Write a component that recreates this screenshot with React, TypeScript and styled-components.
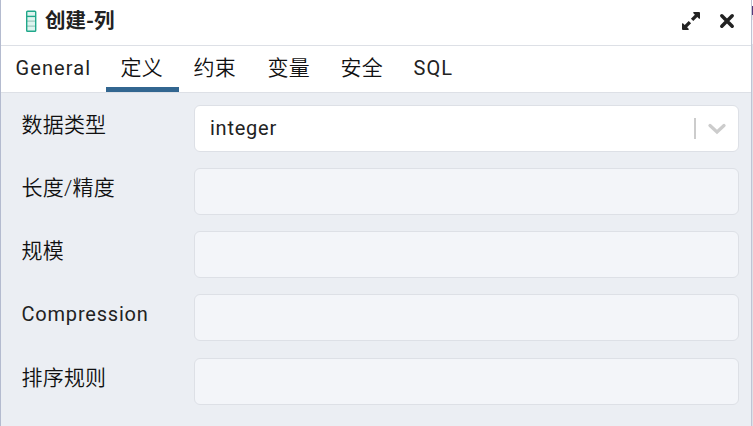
import React from "react";
import styled, { createGlobalStyle } from "styled-components";

const GlobalStyle = createGlobalStyle`
  * { box-sizing: border-box; }
  body { margin: 0; background: #ebeef3; overflow: hidden; }
`;

const Backdrop = styled.div`
  display: flex;
  height: 426px;
  background: linear-gradient(#fff 0 6px, #54397a 6px 15px, #e4e2e8 15px 20px, #f4f4f8 20px 44px, #dde0e6 44px);
`;

const Dialog = styled.section`
  display: flex;
  flex-direction: column;
  width: 752px;
  height: 426px;
  border: solid #b4bbcf;
  border-width: 0 1px;
  border-right-color: #bfc4d4;
  background: #ebeef3;
  color: #222;
  font-family: Roboto, "Noto Sans CJK SC", sans-serif;
  font-size: 20px;
  font-weight: 370;
  letter-spacing: 0.75px;
`;

const Header = styled.header`
  display: flex;
  align-items: center;
  height: 46px;
  padding: 0 16px 4px 24px;
  background: #fff;
  border-bottom: 1px solid #dde0e6;
`;

const Title = styled.h1`
  flex: 1;
  margin: 0 0 0 8px;
  font-size: 20.5px;
  line-height: 30px;
  font-weight: 700;
  letter-spacing: 0;
`;

const Actions = styled.div`
  display: flex;
  align-items: center;
  gap: 18px;
`;

const IconButton = styled.button`
  display: flex;
  padding: 0;
  border: 0;
  background: none;
  color: #222;
`;

const Tabs = styled.nav`
  display: flex;
  height: 47px;
  background: #fff;
  border-bottom: 1px solid #dde0e6;
`;

const Tab = styled.button<{ $active?: boolean; $width: number }>`
  width: ${(p) => p.$width}px;
  height: 46px;
  padding: 3px 0 0 14.5px;
  border: 0;
  border-bottom: 5px solid ${(p) => (p.$active ? "#326690" : "transparent")};
  background: none;
  color: inherit;
  font: inherit;
  line-height: 38px;
  text-align: left;
  white-space: nowrap;
`;

const Text = styled.span<{ $cjk: boolean; $spacing?: number }>`
  color: ${(p) => (p.$cjk ? "#111" : "#222")};
  font-size: ${(p) => (p.$cjk ? 21 : 20)}px;
  font-weight: ${(p) => (p.$cjk ? 350 : 370)};
  letter-spacing: ${(p) => (p.$cjk ? 0.2 : p.$spacing ?? 0.8)}px;
`;

const Form = styled.main`
  display: flex;
  flex-direction: column;
  gap: 16.15px;
  padding: 12px 12px 0 20.5px;
`;

const Row = styled.div`
  display: grid;
  grid-template-columns: 172.5px 1fr;
  height: 47px;
`;

const Label = styled.label`
  line-height: 30px;
  padding-top: 5px;
`;

const Field = styled.div<{ $disabled?: boolean }>`
  display: flex;
  align-items: center;
  height: 47px;
  padding: 0 12px 0 15px;
  border: 1px solid #dde0e6;
  border-radius: 6px;
  background: ${(p) => (p.$disabled ? "#f3f5f9" : "#fff")};
`;

const Value = styled.span`
  flex: 1;
  margin-top: -2px;
`;

const Separator = styled.span`
  width: 2px;
  height: 21px;
  margin-right: 12px;
  background: #ccc;
`;

const ColumnIcon = () => (
  <svg width="12" height="23" viewBox="0 0 12 23">
    <rect x="1.7" y="2.2" width="9" height="20" rx="0.8" fill="#def4ef" />
    <path d="M1.7 12.2h9M1.7 17.2h9" stroke="#9fc9c0" strokeWidth="1.2" />
    <rect x="1.7" y="2.2" width="9" height="20" rx="0.8" fill="none" stroke="#20a88b" strokeWidth="1.4" />
    <path d="M1.7 7.4h9" stroke="#20a88b" strokeWidth="1.4" />
  </svg>
);

const ExpandIcon = () => (
  <svg width="20" height="20" viewBox="0 0 20 20">
    <path
      d="M12.6 1H18q1 0 1 1v5.4q-.4.8-1.2.2l-1.5-1.5-4 4-2.4-2.4 4-4-1.5-1.5q-.5-.8.2-1.2zM7.4 19H2q-1 0-1-1v-5.4q.4-.8 1.2-.2l1.5 1.5 4-4 2.4 2.4-4 4 1.5 1.5q.5.8-.2 1.2z"
      fill="currentColor"
    />
    <path d="M7.3 7.3l5.4 5.4" stroke="#fff" strokeWidth="1.6" />
  </svg>
);

const CloseIcon = () => (
  <svg width="16" height="16" viewBox="0 0 16 16">
    <path d="M2.8 2.8l10.4 10.4M13.2 2.8L2.8 13.2" stroke="currentColor" strokeWidth="3.5" strokeLinecap="round" />
  </svg>
);

const ChevronIcon = () => (
  <svg width="18" height="12" viewBox="0 0 18 12">
    <path d="M2 2.5l7 6.5 7-6.5" fill="none" stroke="#ccc" strokeWidth="3.2" strokeLinecap="round" />
  </svg>
);

const tabs = [
  { label: "General", width: 105 },
  { label: "定义", width: 73 },
  { label: "约束", width: 74 },
  { label: "变量", width: 73 },
  { label: "安全", width: 73 },
  { label: "SQL", width: 70 },
];

const emptyFields = ["长度/精度", "规模", "Compression", "排序规则"];

const isCjk = (text: string) => /[\u4e00-\u9fff]/.test(text);

export default function App() {
  return (
    <Backdrop>
      <GlobalStyle />
      <Dialog>
        <Header>
          <ColumnIcon />
          <Title>创建-列</Title>
          <Actions>
            <IconButton aria-label="Maximize"><ExpandIcon /></IconButton>
            <IconButton aria-label="Close"><CloseIcon /></IconButton>
          </Actions>
        </Header>
        <Tabs>
          {tabs.map((tab, i) => (
            <Tab key={tab.label} $width={tab.width} $active={i === 1}>
              <Text $cjk={isCjk(tab.label)} $spacing={1.1}>{tab.label}</Text>
            </Tab>
          ))}
        </Tabs>
        <Form>
          <Row>
            <Label><Text $cjk>数据类型</Text></Label>
            <Field>
              <Value>integer</Value>
              <Separator />
              <ChevronIcon />
            </Field>
          </Row>
          {emptyFields.map((label) => (
            <Row key={label}>
              <Label><Text $cjk={isCjk(label)}>{label}</Text></Label>
              <Field $disabled />
            </Row>
          ))}
        </Form>
      </Dialog>
    </Backdrop>
  );
}
